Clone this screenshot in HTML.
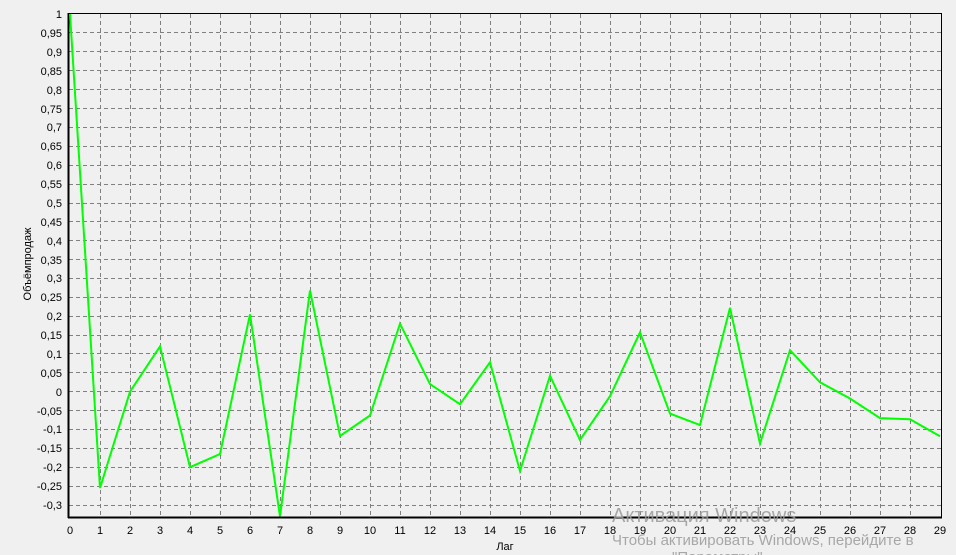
<!DOCTYPE html>
<html><head><meta charset="utf-8"><style>
html,body{margin:0;padding:0;background:#f0f0f0;width:956px;height:555px;overflow:hidden}
svg{display:block;font-family:"Liberation Sans",sans-serif}
</style></head><body>
<svg width="956" height="555" xmlns="http://www.w3.org/2000/svg">
<rect width="956" height="555" fill="#f0f0f0"/>
<g stroke="#808080" stroke-width="1" stroke-dasharray="4,3" fill="none" shape-rendering="crispEdges">
<path d="M69 32.5H941M69 51.5H941M69 70.5H941M69 89.5H941M69 108.5H941M69 127.5H941M69 146.5H941M69 165.5H941M69 184.5H941M69 203.5H941M69 221.5H941M69 240.5H941M69 259.5H941M69 278.5H941M69 297.5H941M69 316.5H941M69 335.5H941M69 353.5H941M69 372.5H941M69 391.5H941M69 410.5H941M69 429.5H941M69 448.5H941M69 467.5H941M69 486.5H941M69 505.5H941"/>
<path d="M100.5 14V517M130.5 14V517M160.5 14V517M190.5 14V517M220.5 14V517M250.5 14V517M280.5 14V517M310.5 14V517M340.5 14V517M370.5 14V517M400.5 14V517M430.5 14V517M460.5 14V517M490.5 14V517M520.5 14V517M550.5 14V517M580.5 14V517M610.5 14V517M640.5 14V517M670.5 14V517M700.5 14V517M730.5 14V517M760.5 14V517M790.5 14V517M820.5 14V517M850.5 14V517M880.5 14V517M910.5 14V517"/>
</g>
<g stroke="#000" fill="none" shape-rendering="crispEdges">
<path d="M68 13.5H941.5V517" stroke-width="1"/>
<path d="M68.5 13V518" stroke-width="2"/>
<path d="M68 517.5H942" stroke-width="2"/>
</g>
<polyline fill="none" stroke="#00ff00" stroke-width="2" stroke-linejoin="miter" points="70,14 100,488 130,391.7 160,346.4 190,467.2 220,454 250,314.3 280,516.3 310,290.5 340,435.9 370,415.5 400,323.7 430,384.1 460,404.2 490,362.3 520,471 550,375.8 580,440 610,396.2 640,332.4 670,413.6 700,425 730,307.9 760,443.5 790,350.2 820,382.3 850,398.5 880,418.1 910,419.3 940,436.3"/>
<g font-size="11" fill="#000" text-anchor="end">
<text x="62" y="18">1</text><text x="62" y="37">0,95</text><text x="62" y="56">0,9</text><text x="62" y="75">0,85</text><text x="62" y="94">0,8</text><text x="62" y="113">0,75</text><text x="62" y="131">0,7</text><text x="62" y="150">0,65</text><text x="62" y="169">0,6</text><text x="62" y="188">0,55</text><text x="62" y="207">0,5</text><text x="62" y="226">0,45</text><text x="62" y="245">0,4</text><text x="62" y="264">0,35</text><text x="62" y="282">0,3</text><text x="62" y="301">0,25</text><text x="62" y="320">0,2</text><text x="62" y="339">0,15</text><text x="62" y="358">0,1</text><text x="62" y="377">0,05</text><text x="62" y="396">0</text><text x="62" y="415">-0,05</text><text x="62" y="433">-0,1</text><text x="62" y="452">-0,15</text><text x="62" y="471">-0,2</text><text x="62" y="490">-0,25</text><text x="62" y="509">-0,3</text>
</g>
<g font-size="11" fill="#000" text-anchor="middle">
<text x="70" y="534">0</text><text x="100" y="534">1</text><text x="130" y="534">2</text><text x="160" y="534">3</text><text x="190" y="534">4</text><text x="220" y="534">5</text><text x="250" y="534">6</text><text x="280" y="534">7</text><text x="310" y="534">8</text><text x="340" y="534">9</text><text x="370" y="534">10</text><text x="400" y="534">11</text><text x="430" y="534">12</text><text x="460" y="534">13</text><text x="490" y="534">14</text><text x="520" y="534">15</text><text x="550" y="534">16</text><text x="580" y="534">17</text><text x="610" y="534">18</text><text x="640" y="534">19</text><text x="670" y="534">20</text><text x="700" y="534">21</text><text x="730" y="534">22</text><text x="760" y="534">23</text><text x="790" y="534">24</text><text x="820" y="534">25</text><text x="850" y="534">26</text><text x="880" y="534">27</text><text x="910" y="534">28</text><text x="940" y="534">29</text>
<text x="505" y="550">Лаг</text>
<text x="0" y="0" transform="translate(31,264) rotate(-90)">Объёмпродаж</text>
</g>
<g fill="#9a9a9a" fill-opacity="0.85">
<text x="612" y="522" font-size="20">Активация Windows</text>
<text x="612" y="545" font-size="15">Чтобы активировать Windows, перейдите в</text>
<text x="672" y="562" font-size="15">"Параметры".</text>
</g>
</svg>
</body></html>
